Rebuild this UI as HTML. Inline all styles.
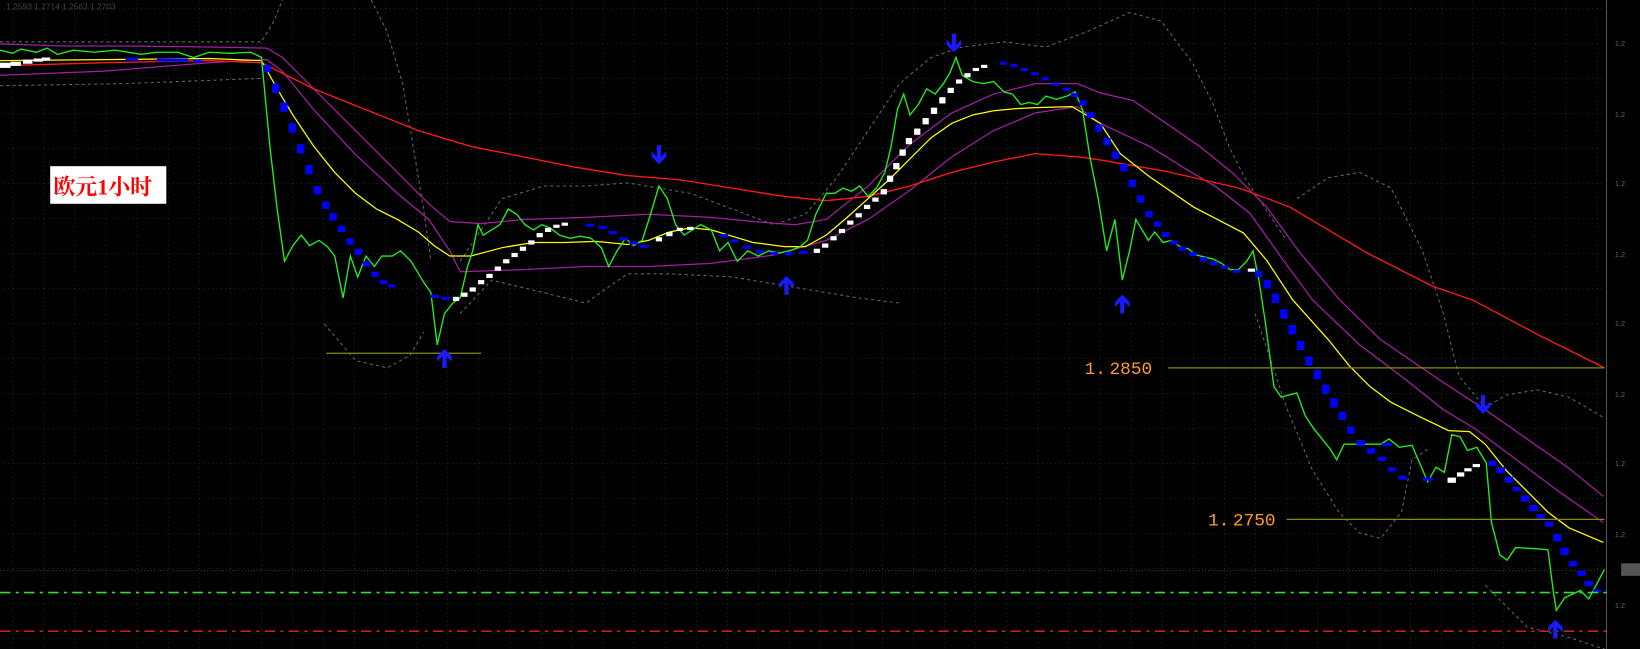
<!DOCTYPE html>
<html><head><meta charset="utf-8"><style>
html,body{margin:0;padding:0;background:#000;overflow:hidden}
svg{display:block}
</style></head><body>
<svg width="1640" height="649" viewBox="0 0 1568 621" preserveAspectRatio="none" xmlns="http://www.w3.org/2000/svg">
<defs>
<pattern id="g" patternUnits="userSpaceOnUse" x="12" y="7.7" width="29.7" height="33.5">
<line x1="0" y1="0" x2="29.7" y2="0" stroke="#3a4444" stroke-width="1" stroke-dasharray="1.2 3"/>
<line x1="0" y1="0" x2="0" y2="33.5" stroke="#3a4444" stroke-width="1" stroke-dasharray="1.2 3"/>
</pattern>
</defs>
<rect width="1568" height="621" fill="#000"/>
<rect x="0" y="0" width="1536" height="621" fill="url(#g)"/>
<line x1="1536" y1="0" x2="1536" y2="621" stroke="#555" stroke-width="1"/>
<line x1="0" y1="546" x2="1536" y2="546" stroke="#444" stroke-dasharray="1 2"/>
<g fill="#666" font-family="Liberation Sans, sans-serif" font-size="7">
<text x="1544" y="44">1.2</text><text x="1544" y="112">1.2</text><text x="1544" y="178">1.2</text><text x="1544" y="246">1.2</text><text x="1544" y="312">1.2</text><text x="1544" y="380">1.2</text><text x="1544" y="446">1.2</text><text x="1544" y="514">1.2</text><text x="1544" y="582">1.2</text>
</g>
<rect x="1550" y="539" width="18" height="12" fill="#555"/>
<text x="6" y="9" fill="#444" font-family="Liberation Sans, sans-serif" font-size="8">1.2593 1.2714 1.2563 1.2703</text>

<!-- bollinger dashed -->
<g fill="none" stroke="#666" stroke-width="1" stroke-dasharray="3 3">
<path d="M0,40 L250,40 L262,20 L270,0"/>
<path d="M0,82 L120,80 L250,75"/>
<path d="M355,0 L370,30 L385,80 L395,140 L405,200 L412,250"/>
<path d="M310,310 L340,345 L370,352 L392,340 L405,318"/>
<path d="M440,250 L480,190 L520,178 L560,178 L600,175 L660,185 L700,200 L740,215 L770,205 L800,170 L830,125 L860,80 L890,55 L920,45 L960,40 L1000,45 L1040,30 L1080,12 L1110,20 L1140,60 L1160,100 L1175,140 L1190,170 L1210,200 L1230,230"/>
<path d="M440,300 L470,268 L520,280 L560,290 L600,262 L640,262 L700,265 L760,275 L820,285 L860,290"/>
<path d="M1240,190 L1270,170 L1300,165 L1330,180 L1360,240 L1380,300 L1395,360 L1420,390 L1440,378 L1470,373 L1500,380 L1534,400"/>
<path d="M1200,300 L1230,390 L1255,450 L1280,490 L1300,510 L1320,515 L1340,490 L1350,440 L1365,430"/>
<path d="M1420,560 L1460,600 L1500,610 L1534,621"/>
</g>

<!-- purple bands -->
<g fill="none" stroke="#a020a0" stroke-width="1.2">
<path d="M0,42 L60,44 L120,44 L200,45 L255,46 L270,55 L300,85 L340,125 L380,165 L410,195 L430,212 L460,214 L500,210 L560,208 L620,205 L680,208 L720,212 L760,215 L790,210 L830,178 L870,138 L910,108 L950,90 L990,80 L1030,80 L1052,89 L1083,96 L1115,118 L1147,140 L1179,166 L1211,198 L1243,242 L1281,287 L1320,325 L1377,364 L1420,392 L1460,420 L1500,448 L1533,475"/>
<path d="M0,72 L100,68 L200,60 L255,57 L270,68 L300,105 L340,148 L380,185 L410,210 L430,240 L440,260 L500,258 L560,255 L620,255 L680,252 L740,244 L790,230 L830,210 L870,182 L910,150 L950,125 L990,108 L1030,102 L1052,118 L1099,140 L1131,160 L1163,179 L1195,204 L1227,249 L1255,287 L1300,330 L1345,364 L1380,392 L1410,410 L1450,440 L1490,470 L1533,500"/>
</g>
<!-- red MA -->
<path fill="none" stroke="#ff1a1a" stroke-width="1.3" d="M0,63 L100,60 L200,58 L250,60 L300,85 L350,105 L400,125 L450,140 L500,150 L550,160 L600,168 L650,172 L700,180 L750,188 L790,192 L830,188 L870,178 L910,165 L950,155 L990,147 L1030,150 L1052,153 L1115,164 L1185,180 L1233,198 L1307,242 L1370,274 L1408,287 L1470,320 L1534,352"/>
<!-- yellow MA -->
<path fill="none" stroke="#ffff00" stroke-width="1.2" d="M0,58 L100,57 L200,56 L250,58 L265,85 L280,110 L300,140 L320,165 L340,185 L360,200 L380,210 L400,222 L415,235 L430,245 L450,245 L480,237 L510,232 L540,232 L570,231 L600,234 L620,230 L640,222 L660,218 L680,220 L700,226 L720,232 L750,236 L770,236 L790,225 L810,208 L830,190 L850,172 L870,152 L890,132 L910,118 L930,110 L950,106 L970,104 L990,103 L1025,102 L1052,118 L1071,147 L1099,169 L1141,198 L1189,223 L1211,249 L1236,287 L1270,325 L1290,350 L1310,370 L1330,385 L1360,400 L1385,412 L1405,413 L1420,425 L1440,450 L1460,470 L1480,490 L1500,505 L1533,519"/>
<!-- green price -->
<path fill="none" stroke="#22ee22" stroke-width="1.3" d="M0,48 L12,51 L20,47 L35,50 L45,46 L55,52 L70,48 L90,50 L110,48 L135,52 L150,50 L170,50 L185,55 L200,50 L220,51 L240,50 L250,55 L258,140 L265,200 L272,250 L280,235 L288,225 L296,235 L305,230 L313,236 L320,245 L328,285 L335,245 L342,265 L350,245 L358,255 L365,245 L375,245 L383,240 L393,250 L405,270 L412,280 L418,330 L425,300 L433,290 L440,285 L447,255 L452,240 L457,215 L462,225 L470,220 L478,215 L486,200 L494,205 L502,215 L510,220 L518,215 L526,218 L535,225 L545,228 L555,226 L565,228 L575,237 L582,255 L590,240 L598,228 L606,235 L614,230 L622,205 L630,178 L638,190 L646,215 L654,225 L662,220 L670,215 L680,220 L688,240 L696,232 L705,250 L715,240 L725,245 L735,240 L745,242 L755,240 L765,236 L772,230 L780,205 L790,185 L798,185 L806,180 L814,183 L822,178 L830,188 L838,180 L846,165 L852,140 L858,105 L864,90 L870,110 L878,100 L886,85 L894,90 L902,80 L908,70 L914,55 L920,72 L930,78 L940,80 L950,78 L960,88 L968,90 L976,100 L984,98 L992,100 L1000,92 L1010,95 L1020,92 L1028,88 L1035,105 L1042,150 L1050,190 L1058,240 L1066,210 L1073,268 L1080,240 L1086,210 L1092,220 L1098,230 L1104,222 L1112,232 L1120,230 L1128,236 L1136,238 L1144,244 L1152,246 L1160,248 L1168,252 L1176,258 L1184,258 L1192,250 L1198,240 L1204,270 L1210,310 L1218,370 L1225,380 L1232,378 L1240,376 L1248,398 L1256,410 L1264,420 L1272,430 L1278,440 L1285,425 L1295,425 L1305,425 L1320,425 L1328,420 L1338,428 L1350,426 L1365,461 L1373,447 L1381,452 L1388,416 L1396,418 L1403,431 L1412,428 L1421,443 L1426,500 L1434,531 L1441,536 L1449,524 L1468,525 L1480,526 L1485,565 L1488,584 L1496,572 L1511,565 L1519,573 L1534,545"/>

<!-- PSAR dots -->
<g fill="#fff">
<rect x="0" y="60" width="10" height="5"/><rect x="10" y="59" width="10" height="4"/><rect x="22" y="57" width="9" height="4"/><rect x="32" y="56" width="9" height="3"/><rect x="40" y="55" width="8" height="3"/>
<rect x="433" y="284" width="6" height="4"/><rect x="441" y="280" width="6" height="4"/><rect x="449" y="275" width="6" height="4"/><rect x="457" y="268" width="6" height="4"/><rect x="465" y="262" width="6" height="4"/><rect x="473" y="255" width="6" height="4"/><rect x="481" y="248" width="6" height="4"/><rect x="489" y="242" width="6" height="4"/><rect x="497" y="236" width="6" height="4"/><rect x="505" y="230" width="6" height="4"/><rect x="513" y="223" width="6" height="4"/><rect x="521" y="218" width="6" height="4"/><rect x="529" y="215" width="6" height="3"/><rect x="537" y="213" width="6" height="3"/>
<rect x="627" y="227" width="6" height="4"/><rect x="637" y="222" width="6" height="4"/><rect x="647" y="218" width="6" height="3"/><rect x="657" y="217" width="6" height="3"/>
<rect x="778" y="238" width="6" height="4"/><rect x="786" y="233" width="6" height="4"/><rect x="794" y="226" width="6" height="4"/><rect x="802" y="219" width="6" height="4"/><rect x="810" y="211" width="6" height="4"/><rect x="818" y="204" width="6" height="4"/><rect x="826" y="196" width="6" height="4"/><rect x="834" y="189" width="6" height="4"/><rect x="842" y="181" width="6" height="5"/><rect x="848" y="168" width="6" height="6"/><rect x="854" y="156" width="6" height="6"/><rect x="860" y="143" width="6" height="6"/><rect x="866" y="132" width="6" height="6"/><rect x="874" y="123" width="6" height="6"/><rect x="882" y="113" width="6" height="6"/><rect x="890" y="103" width="6" height="6"/><rect x="898" y="93" width="6" height="6"/><rect x="906" y="84" width="6" height="5"/><rect x="914" y="76" width="6" height="4"/><rect x="922" y="70" width="6" height="4"/><rect x="930" y="65" width="6" height="3"/><rect x="938" y="62" width="6" height="3"/>
<rect x="1193" y="257" width="7" height="3"/>
<rect x="1384" y="457" width="8" height="5"/><rect x="1393" y="452" width="7" height="4"/><rect x="1400" y="448" width="7" height="3"/><rect x="1408" y="444" width="7" height="3"/>
</g>
<g fill="#0000ff">
<rect x="120" y="55" width="12" height="3"/><rect x="150" y="56" width="30" height="3"/><rect x="185" y="57" width="8" height="3"/>
<rect x="252" y="62" width="7" height="7"/><rect x="260" y="80" width="7" height="9"/><rect x="268" y="98" width="7" height="9"/><rect x="276" y="118" width="7" height="9"/><rect x="284" y="138" width="7" height="9"/><rect x="292" y="158" width="7" height="9"/><rect x="300" y="178" width="7" height="8"/><rect x="308" y="193" width="7" height="7"/><rect x="315" y="204" width="7" height="7"/><rect x="323" y="216" width="7" height="6"/><rect x="331" y="228" width="7" height="6"/><rect x="339" y="238" width="7" height="6"/><rect x="347" y="250" width="7" height="5"/><rect x="355" y="260" width="7" height="5"/><rect x="363" y="268" width="7" height="4"/><rect x="371" y="272" width="7" height="3"/>
<rect x="412" y="282" width="8" height="3"/><rect x="422" y="284" width="8" height="3"/>
<rect x="560" y="214" width="8" height="3"/><rect x="572" y="216" width="8" height="3"/><rect x="582" y="221" width="8" height="3"/><rect x="592" y="227" width="8" height="3"/><rect x="602" y="231" width="8" height="3"/><rect x="612" y="234" width="8" height="3"/>
<rect x="688" y="224" width="8" height="3"/><rect x="698" y="229" width="8" height="3"/><rect x="710" y="235" width="8" height="3"/><rect x="722" y="239" width="8" height="3"/><rect x="736" y="241" width="8" height="3"/><rect x="750" y="241" width="8" height="3"/><rect x="764" y="240" width="8" height="3"/>
<rect x="956" y="59" width="7" height="3"/><rect x="966" y="61" width="7" height="3"/><rect x="976" y="65" width="7" height="3"/><rect x="986" y="69" width="7" height="3"/><rect x="996" y="74" width="7" height="3"/><rect x="1006" y="79" width="7" height="3"/><rect x="1016" y="84" width="7" height="3"/><rect x="1024" y="89" width="7" height="4"/><rect x="1032" y="96" width="7" height="5"/><rect x="1039" y="107" width="7" height="6"/><rect x="1047" y="119" width="7" height="7"/><rect x="1055" y="132" width="7" height="7"/><rect x="1063" y="145" width="7" height="7"/><rect x="1071" y="157" width="7" height="7"/><rect x="1079" y="172" width="7" height="7"/><rect x="1087" y="187" width="7" height="7"/><rect x="1095" y="202" width="7" height="6"/><rect x="1103" y="212" width="7" height="5"/><rect x="1111" y="222" width="7" height="5"/><rect x="1119" y="230" width="7" height="4"/><rect x="1127" y="236" width="7" height="4"/><rect x="1137" y="241" width="7" height="4"/><rect x="1147" y="246" width="7" height="4"/><rect x="1157" y="250" width="7" height="4"/><rect x="1167" y="254" width="7" height="3"/><rect x="1179" y="258" width="7" height="3"/>
<rect x="1200" y="259" width="7" height="6"/><rect x="1208" y="268" width="7" height="8"/><rect x="1216" y="281" width="7" height="9"/><rect x="1224" y="296" width="7" height="9"/><rect x="1232" y="311" width="7" height="9"/><rect x="1240" y="326" width="7" height="9"/><rect x="1248" y="341" width="7" height="9"/><rect x="1256" y="354" width="7" height="9"/><rect x="1264" y="368" width="7" height="9"/><rect x="1272" y="381" width="7" height="9"/><rect x="1280" y="394" width="7" height="8"/><rect x="1288" y="408" width="7" height="7"/><rect x="1297" y="421" width="8" height="6"/><rect x="1307" y="429" width="8" height="5"/><rect x="1317" y="437" width="8" height="4"/><rect x="1327" y="447" width="8" height="4"/><rect x="1337" y="455" width="8" height="4"/>
<rect x="1321" y="424" width="10" height="3"/><rect x="1280" y="426" width="0" height="0"/><rect x="1360" y="457" width="10" height="3"/>
<rect x="1423" y="441" width="8" height="5"/><rect x="1431" y="447" width="8" height="6"/><rect x="1439" y="456" width="8" height="6"/><rect x="1446" y="466" width="8" height="4"/><rect x="1454" y="474" width="8" height="6"/><rect x="1462" y="483" width="8" height="6"/><rect x="1469" y="492" width="8" height="5"/><rect x="1477" y="499" width="8" height="5"/><rect x="1485" y="511" width="8" height="7"/><rect x="1492" y="524" width="8" height="7"/><rect x="1500" y="537" width="8" height="5"/><rect x="1508" y="546" width="8" height="5"/><rect x="1515" y="556" width="8" height="5"/><rect x="1523" y="564" width="8" height="3"/>
</g>

<!-- support/resistance lines -->
<g stroke="#8a8a00" stroke-width="1.2">
<line x1="312" y1="338" x2="460" y2="338"/>
<line x1="1117" y1="352" x2="1534" y2="352"/>
<line x1="1230" y1="497" x2="1534" y2="497"/>
</g>
<g fill="#ff9a2a" font-family="Liberation Mono, monospace" font-size="17">
<text x="1037" y="358">1.&#8201;2850</text>
<text x="1155" y="503">1.&#8201;2750</text>
</g>

<!-- dash-dot horizontals -->
<line x1="0" y1="567" x2="1536" y2="567" stroke="#33dd33" stroke-width="1.6" stroke-dasharray="10 5 3 5"/>
<line x1="0" y1="604" x2="1536" y2="604" stroke="#ee2222" stroke-width="1.3" stroke-dasharray="10 5 3 5"/>

<!-- arrows -->
<g fill="#1a1aff">
<path id="dn" d="M-2,0 h4 v11 l5,-5 v5 l-7,7 l-7,-7 v-5 l5,5 z" transform="translate(912,32)"/>
<path d="M-2,0 h4 v11 l5,-5 v5 l-7,7 l-7,-7 v-5 l5,5 z" transform="translate(630,139)"/>
<path d="M-2,0 h4 v11 l5,-5 v5 l-7,7 l-7,-7 v-5 l5,5 z" transform="translate(1418,378)"/>
<path d="M-2,0 h4 v-11 l5,5 v-5 l-7,-7 l-7,7 v5 l5,-5 z" transform="translate(425,352)"/>
<path d="M-2,0 h4 v-11 l5,5 v-5 l-7,-7 l-7,7 v5 l5,-5 z" transform="translate(752,282)"/>
<path d="M-2,0 h4 v-11 l5,5 v-5 l-7,-7 l-7,7 v5 l5,-5 z" transform="translate(1073,300)"/>
<path d="M-2,0 h4 v-11 l5,5 v-5 l-7,-7 l-7,7 v5 l5,-5 z" transform="translate(1487,611)"/>
</g>

<!-- label -->
<rect x="48" y="159" width="111" height="36" fill="#fff"/>
<text x="51" y="186" fill="#ff0000" font-family="Liberation Serif, 'Noto Serif CJK SC', serif" font-size="21" font-weight="bold">欧元1小时</text>
</svg>
</body></html>
